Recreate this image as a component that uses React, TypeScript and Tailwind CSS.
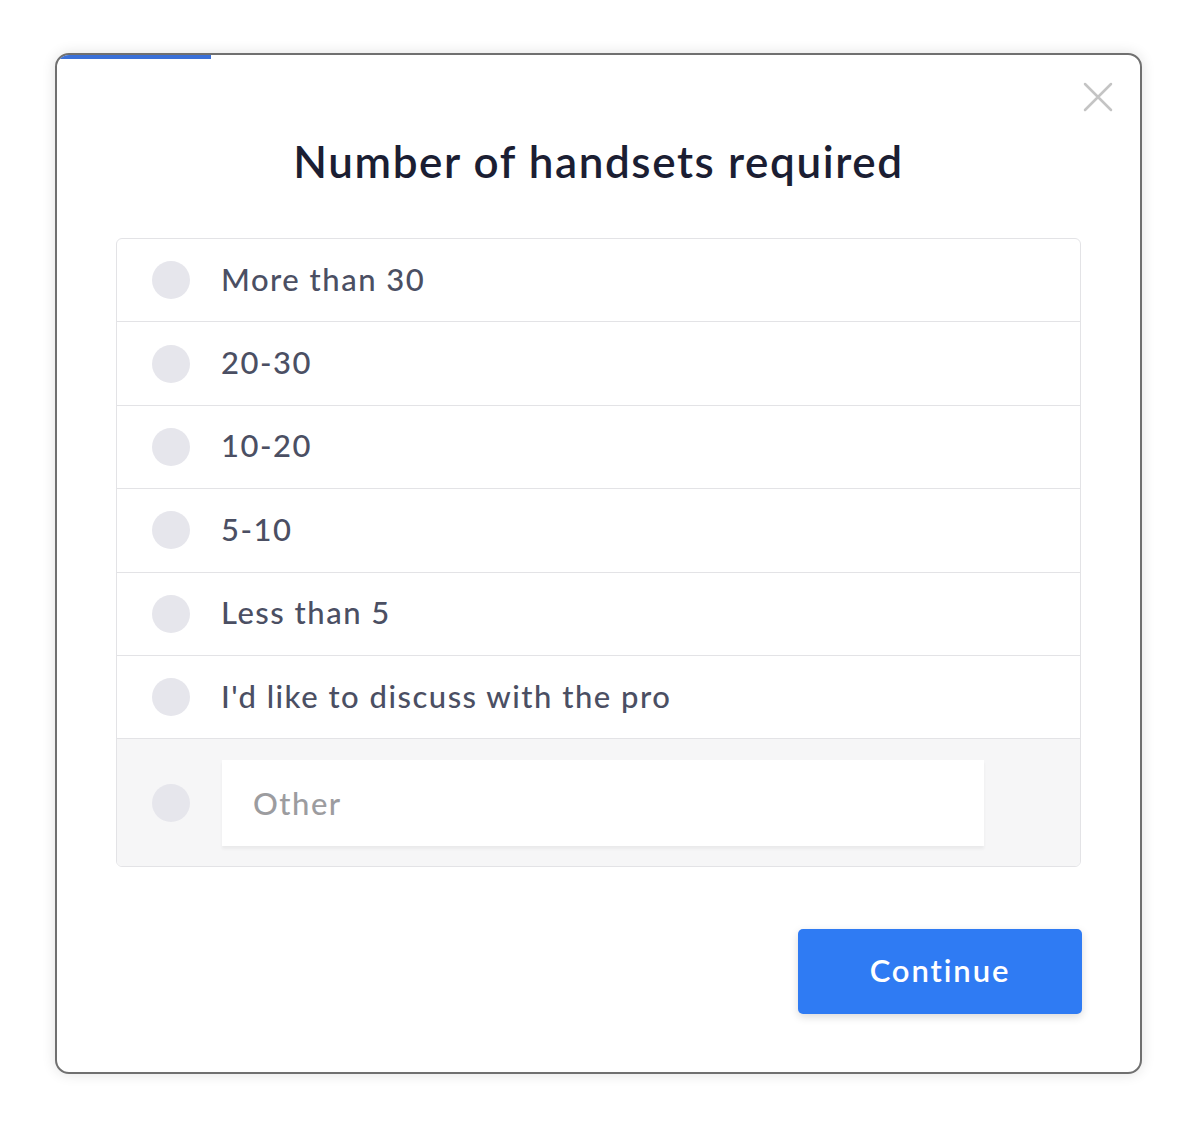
import React from "react";

const options = [
  "More than 30",
  "20-30",
  "10-20",
  "5-10",
  "Less than 5",
  "I'd like to discuss with the pro",
];

function Radio() {
  return <div className="w-[38px] h-[38px] rounded-full bg-[#e6e6ec] shrink-0" />;
}

export default function App() {
  return (
    <div className="w-[1200px] h-[1127px] bg-white pt-[53px] pl-[55px]" style={{ fontFamily: "Lato, 'Noto Sans', sans-serif" }}>
      <div className="relative w-[1087px] h-[1021px] rounded-[14px] border-[2px] border-[#707070] bg-white shadow-[0_0_14px_rgba(0,0,0,0.12)] overflow-hidden">
        <div className="absolute left-0 top-0 h-[4px] w-[154px] bg-[#3a70d8]" />
        <button className="absolute right-[25px] top-[25px] w-[34px] h-[34px] flex items-center justify-center">
          <svg width="32" height="32" viewBox="0 0 32 32" fill="none" stroke="#c4c4c4" strokeWidth="2.5" strokeLinecap="round">
            <path d="M3 3 L29 29 M29 3 L3 29" />
          </svg>
        </button>
        <h1 className="pt-[80px] text-center text-[44px] leading-[52px] font-semibold text-[#1b1e33] tracking-[1.6px]">
          Number of handsets required
        </h1>
        <div className="mx-[59px] mt-[51px] border border-[#e3e3e6] rounded-[6px] overflow-hidden">
          {options.map((o) => (
            <div key={o} className="h-[83.4px] flex items-center border-b border-[#e3e3e6] pl-[35px]">
              <Radio />
              <span className="ml-[31px] text-[31px] leading-[36px] text-[#4b4f63] font-medium tracking-[1.5px] pb-[3px]">{o}</span>
            </div>
          ))}
          <div className="h-[127px] bg-[#f6f6f7] flex items-center pl-[35px]">
            <Radio />
            <div className="ml-[32px] w-[762px] h-[86px] bg-white shadow-[0_3px_3px_rgba(0,0,0,0.05)] flex items-center pl-[31px]">
              <span className="text-[31px] text-[#9c9c9f] font-medium tracking-[1.5px]">Other</span>
            </div>
          </div>
        </div>
        <div className="flex justify-end mr-[58px] mt-[62px]">
          <button className="w-[284px] h-[85px] rounded-[5px] bg-[#2f7bf3] text-white text-[31px] font-semibold tracking-[1.9px] pb-[4px] shadow-[0_3px_8px_rgba(0,0,0,0.15)]">
            Continue
          </button>
        </div>
      </div>
    </div>
  );
}
